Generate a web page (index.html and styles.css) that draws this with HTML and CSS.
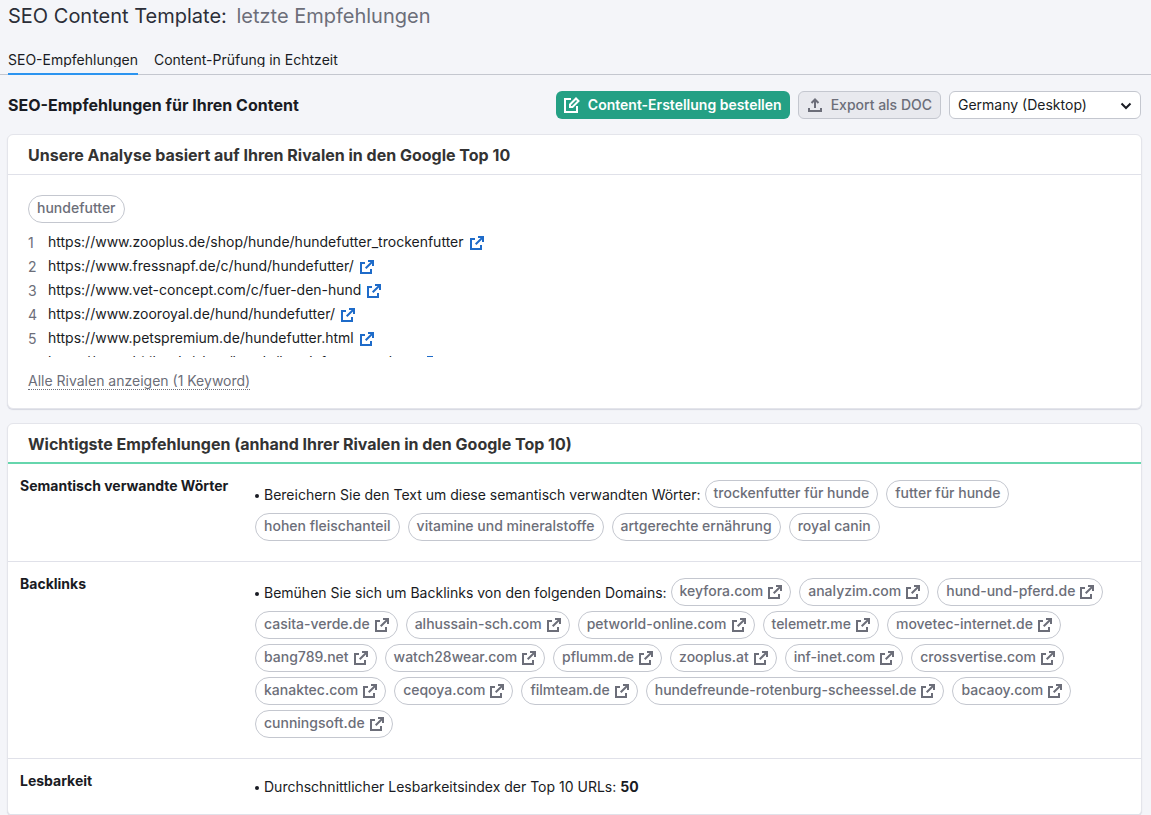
FILE: index.html
```html
<!DOCTYPE html>
<html lang="de">
<head>
<meta charset="utf-8">
<title>SEO Content Template</title>
<link rel="stylesheet" href="styles.css">
</head>
<body>
<svg class="sprite" aria-hidden="true">
  <symbol id="external" viewBox="0 0 14 14">
    <path fill="currentColor" d="M0 2h5v2H2v8h8V9h2v5H0zM8 0h6v6h-2V3.400L6.400 9 5 7.600 10.600 2H8z"/>
  </symbol>
</svg>
<header class="page-header">
  <h1 class="page-title">SEO Content Template: <span class="page-subtitle">letzte Empfehlungen</span></h1>
  <nav class="tabs">
    <a class="tab tab-active" href="#"><span class="tab-text">SEO-Empfehlungen</span></a>
    <a class="tab" href="#"><span class="tab-text">Content-Prüfung in Echtzeit</span></a>
  </nav>
</header>
<main class="content">
  <div class="toolbar">
    <h2 class="toolbar-title">SEO-Empfehlungen für Ihren Content</h2>
    <button class="button button-primary" type="button">
      <svg class="button-icon" viewBox="0 0 16 16" aria-hidden="true"><path fill="none" stroke="currentColor" stroke-width="2" d="M7 2H1v13h12V9M6 10V7.500l6-6 2.500 2.500-6 6z"/></svg>
      Content-Erstellung bestellen
    </button>
    <button class="button button-secondary" type="button">
      <svg class="button-icon" viewBox="0 0 16 16" aria-hidden="true"><path fill="none" stroke="currentColor" stroke-width="2" d="M2 11v3h12v-3M8 11V3M4.500 6 8 2.500 11.500 6"/></svg>
      Export als DOC
    </button>
    <div class="select-wrap">
      <select class="select" aria-label="Region"><option>Germany (Desktop)</option></select>
      <svg class="chevron" viewBox="0 0 12 8" aria-hidden="true"><path fill="none" stroke="currentColor" stroke-width="2" d="M1.500 1.500l4.500 4.500 4.500-4.500"/></svg>
    </div>
  </div>

  <section class="card">
    <h3 class="card-title">Unsere Analyse basiert auf Ihren Rivalen in den Google Top 10</h3>
    <div class="card-body">
      <span class="pill">hundefutter</span>
      <ol class="rivals">
        <li class="rival"><span class="rank">1</span><a class="link" href="#">https://www.zooplus.de/shop/hunde/hundefutter_trockenfutter<svg class="ext"><use href="#external"/></svg></a></li>
        <li class="rival"><span class="rank">2</span><a class="link" href="#">https://www.fressnapf.de/c/hund/hundefutter/<svg class="ext"><use href="#external"/></svg></a></li>
        <li class="rival"><span class="rank">3</span><a class="link" href="#">https://www.vet-concept.com/c/fuer-den-hund<svg class="ext"><use href="#external"/></svg></a></li>
        <li class="rival"><span class="rank">4</span><a class="link" href="#">https://www.zooroyal.de/hund/hundefutter/<svg class="ext"><use href="#external"/></svg></a></li>
        <li class="rival"><span class="rank">5</span><a class="link" href="#">https://www.petspremium.de/hundefutter.html<svg class="ext"><use href="#external"/></svg></a></li>
        <li class="rival"><span class="rank">6</span><a class="link" href="#">https://www.bitiba.de/shop/hunde/hundefutter_trocken<svg class="ext"><use href="#external"/></svg></a></li>
      </ol>
      <button class="show-all" type="button">Alle Rivalen anzeigen (1 Keyword)</button>
    </div>
  </section>

  <section class="card">
    <h3 class="card-title card-title-accent">Wichtigste Empfehlungen (anhand Ihrer Rivalen in den Google Top 10)</h3>
    <div class="row">
      <h4 class="row-label">Semantisch verwandte Wörter</h4>
      <div class="row-content">
        <span class="lead">Bereichern Sie den Text um diese semantisch verwandten Wörter:</span>
        <span class="pill">trockenfutter für hunde</span>
        <span class="pill">futter für hunde</span>
        <span class="pill">hohen fleischanteil</span>
        <span class="pill">vitamine und mineralstoffe</span>
        <span class="pill">artgerechte ernährung</span>
        <span class="pill">royal canin</span>
      </div>
    </div>
    <div class="row">
      <h4 class="row-label">Backlinks</h4>
      <div class="row-content">
        <span class="lead">Bemühen Sie sich um Backlinks von den folgenden Domains:</span>
        <a class="pill" href="#">keyfora.com<svg class="ext"><use href="#external"/></svg></a>
        <a class="pill" href="#">analyzim.com<svg class="ext"><use href="#external"/></svg></a>
        <a class="pill" href="#">hund-und-pferd.de<svg class="ext"><use href="#external"/></svg></a>
        <a class="pill" href="#">casita-verde.de<svg class="ext"><use href="#external"/></svg></a>
        <a class="pill" href="#">alhussain-sch.com<svg class="ext"><use href="#external"/></svg></a>
        <a class="pill" href="#">petworld-online.com<svg class="ext"><use href="#external"/></svg></a>
        <a class="pill" href="#">telemetr.me<svg class="ext"><use href="#external"/></svg></a>
        <a class="pill" href="#">movetec-internet.de<svg class="ext"><use href="#external"/></svg></a>
        <a class="pill" href="#">bang789.net<svg class="ext"><use href="#external"/></svg></a>
        <a class="pill" href="#">watch28wear.com<svg class="ext"><use href="#external"/></svg></a>
        <a class="pill" href="#">pflumm.de<svg class="ext"><use href="#external"/></svg></a>
        <a class="pill" href="#">zooplus.at<svg class="ext"><use href="#external"/></svg></a>
        <a class="pill" href="#">inf-inet.com<svg class="ext"><use href="#external"/></svg></a>
        <a class="pill" href="#">crossvertise.com<svg class="ext"><use href="#external"/></svg></a>
        <a class="pill" href="#">kanaktec.com<svg class="ext"><use href="#external"/></svg></a>
        <a class="pill" href="#">ceqoya.com<svg class="ext"><use href="#external"/></svg></a>
        <a class="pill" href="#">filmteam.de<svg class="ext"><use href="#external"/></svg></a>
        <a class="pill" href="#">hundefreunde-rotenburg-scheessel.de<svg class="ext"><use href="#external"/></svg></a>
        <a class="pill" href="#">bacaoy.com<svg class="ext"><use href="#external"/></svg></a>
        <a class="pill" href="#">cunningsoft.de<svg class="ext"><use href="#external"/></svg></a>
      </div>
    </div>
    <div class="row row-compact">
      <h4 class="row-label">Lesbarkeit</h4>
      <div class="row-content">
        <span class="lead">Durchschnittlicher Lesbarkeitsindex der Top 10 URLs: <b>50</b></span>
      </div>
    </div>
  </section>
</main>
</body>
</html>
```
FILE: styles.css
```css
* { box-sizing: border-box; }
html { overflow: hidden; }
body {
  margin: 0;
  background: #f4f5f9;
  color: #191b23;
  font: 14px/20px Inter, "Liberation Sans", sans-serif;
}
h1, h2, h3, h4, ol { margin: 0; padding: 0; }
button, select { font: inherit; }
a { color: inherit; text-decoration: none; }
.sprite { display: none; }

.page-header { border-bottom: 1px solid #c4c7cf; }
.page-title {
  padding: 4px 8px 0;
  font-size: 20px;
  line-height: 24px;
  font-weight: 400;
  color: #2b2e38;
}
.page-subtitle { margin-left: 4px; color: #6c6e79; }
.tabs { display: flex; gap: 16px; padding: 22px 8px 0; height: 46px; }
.tab { display: block; height: 25px; border-bottom: 2px solid transparent; }
.tab-active { border-bottom-color: #2b94f0; }
.tab-text { display: block; height: 17px; overflow: hidden; }

.content { padding: 16px 9px 0 7px; }
.toolbar { display: flex; align-items: center; gap: 8px; padding: 0 1px 15px; }
.toolbar-title { flex: 1; font-size: 16px; font-weight: 700; line-height: 24px; }
.button {
  display: flex;
  align-items: center;
  gap: 8px;
  height: 28px;
  padding: 0 7px;
  border: 1px solid transparent;
  border-radius: 6px;
  font-weight: 600;
}
.button-icon { width: 16px; height: 16px; }
.button-primary { background: #24a084; color: #fff; }
.button-secondary { padding: 0 8px; background: #e8e9ee; border-color: #c4c7cf; color: #6c6e79; font-weight: 500; }
.select-wrap { position: relative; width: 192px; }
.select {
  appearance: none;
  display: block;
  width: 100%;
  height: 28px;
  padding: 0 28px 0 8px;
  border: 1px solid #c4c7cf;
  border-radius: 6px;
  background: #fff;
  color: #191b23;
}
.chevron { position: absolute; right: 9px; top: 11px; width: 12px; height: 8px; pointer-events: none; }

.card {
  margin-bottom: 14px;
  border: 1px solid #e4e5eb;
  border-radius: 6px;
  background: #fff;
  box-shadow: 0 1px 1px #d5d7e0;
}
.card-title {
  padding: 8px 20px 7px;
  border-bottom: 1px solid #e0e1e9;
  font-size: 16px;
  line-height: 24px;
  font-weight: 700;
  color: #333;
}
.card-title-accent { padding-bottom: 6px; border-bottom: 2px solid #66d6ad; }
.card-body { padding: 20px 20px 18px; }

.pill {
  display: inline-flex;
  height: 28px;
  padding: 2px 8px 0;
  border: 1px solid #c4c7cf;
  border-radius: 14px;
  color: #6c6e79;
  font-weight: 500;
  white-space: nowrap;
}
.ext { width: 14px; height: 14px; }
.pill .ext { margin: 4px 0 0 5px; }

.rivals { height: 127px; margin-top: 7px; overflow: hidden; list-style: none; }
.rival { display: flex; height: 24px; line-height: 24px; }
.rank { width: 20px; padding-top: 1px; color: #6c6e79; }
.link { display: flex; }
.link .ext { margin: 6px 0 0 6px; color: #1e6bc9; }
.show-all {
  display: block;
  margin-top: 16px;
  padding: 0;
  border: 0;
  border-bottom: 1px dotted #6c6e79;
  background: none;
  color: #6c6e79;
  line-height: 16px;
}

.row { display: grid; grid-template-columns: 235px 1fr; padding: 16px 12px 20px; border-bottom: 1px solid #e0e1e9; }
.row-label { font-size: 14px; line-height: 12px; font-weight: 700; }
.row-content { display: flex; flex-wrap: wrap; gap: 5px 8px; }
.lead { padding-top: 5px; margin-right: -4px; }
.lead::before {
  content: "";
  display: inline-block;
  width: 4px;
  height: 4px;
  margin-right: 5px;
  border-radius: 50%;
  background: #191b23;
  vertical-align: 2px;
}
.row-compact { padding-bottom: 17px; }
.row-compact .lead { padding-top: 2px; }
```
